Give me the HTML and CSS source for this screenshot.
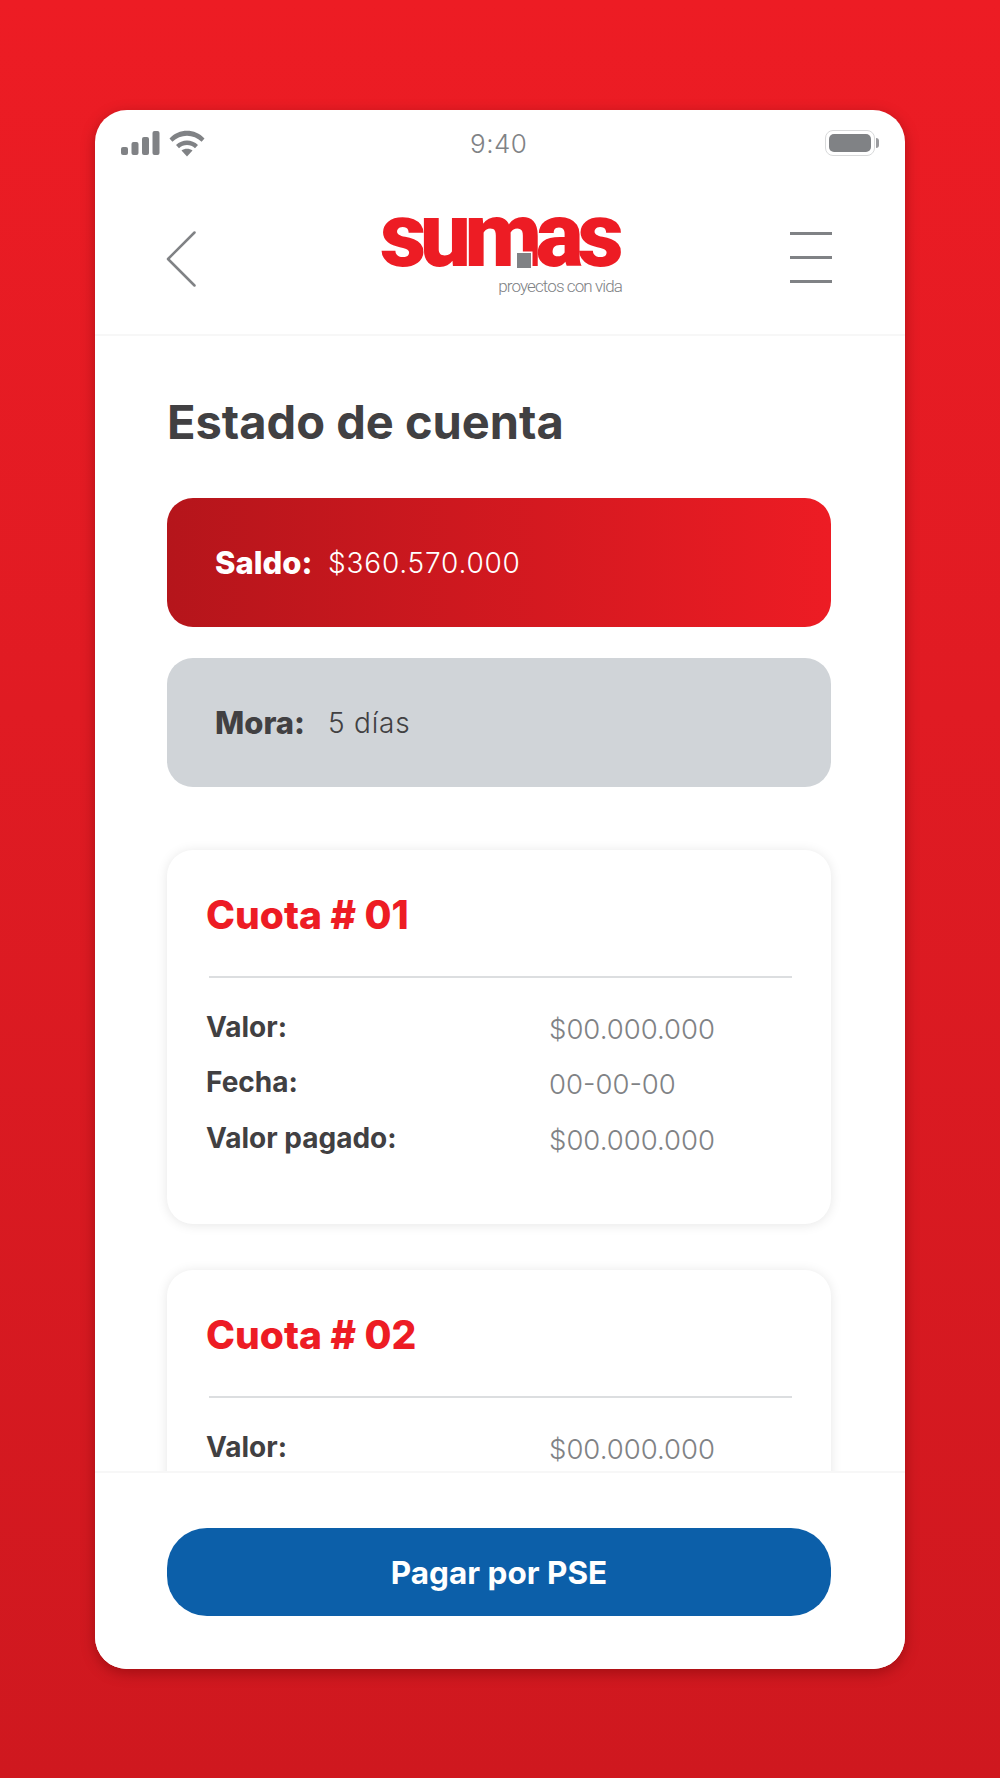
FILE: index.html
```html
<!DOCTYPE html>
<html lang="es">

<head>
    <meta charset="UTF-8">
    <meta name="viewport" content="width=device-width, initial-scale=1.0">
    <title>Estado de cuenta</title>
    <link rel="stylesheet" href="styles.css">
</head>

<body>

    <div class="phone">
        <div class="status-bar">
            <div class="status-icons">
                <svg width="39" height="26" viewBox="0 0 39 26" class="signal">
                    <rect x="0" y="17" width="7" height="8" rx="2"></rect>
                    <rect x="10.500" y="12" width="7" height="13" rx="2"></rect>
                    <rect x="21" y="7" width="7" height="18" rx="2"></rect>
                    <rect x="31.500" y="1" width="7" height="24" rx="2"></rect>
                </svg>
                <svg width="36" height="27" viewBox="0 0 36 27" class="wifi">
                    <path d="M0.500 8.500C10 -1.800 26 -1.800 35.500 8.500L32.600 11.800C24.500 3.600 11.500 3.600 3.400 11.800Z"></path>
                    <path d="M7 15C13 9 23 9 29 15L26 18.300C21.500 14 14.500 14 10 18.300Z"></path>
                    <path d="M12.500 20.500C15.500 18 20.500 18 23.500 20.500L18 26.500Z"></path>
                </svg>
            </div>
            <span class="clock">9:40</span>
            <div class="battery">
                <div class="battery-fill"></div>
            </div>
        </div>

        <header class="top-nav">
            <svg width="30" height="56" viewBox="0 0 30 56" class="back">
                <path d="M28.500 1.500L2 28L28.500 54.500"></path>
            </svg>
            <div class="logo">
                <div class="logo-word">sumas<span class="logo-dot"></span></div>
                <div class="logo-tag">proyectos con vida</div>
            </div>
            <div class="menu">
                <span></span>
                <span></span>
                <span></span>
            </div>
        </header>

        <main class="content">
            <h1>Estado de cuenta</h1>

            <div class="summary summary-red">
                <b>Saldo:</b>
                <span>$360.570.000</span>
            </div>
            <div class="summary summary-grey">
                <b>Mora:</b>
                <span>5 días</span>
            </div>

            <section class="cuota">
                <h2>Cuota # 01</h2>
                <hr>
                <div class="row"><b>Valor:</b><span>$00.000.000</span></div>
                <div class="row"><b>Fecha:</b><span>00-00-00</span></div>
                <div class="row"><b>Valor pagado:</b><span>$00.000.000</span></div>
            </section>

            <section class="cuota">
                <h2>Cuota # 02</h2>
                <hr>
                <div class="row"><b>Valor:</b><span>$00.000.000</span></div>
            </section>
        </main>

        <footer class="pay-bar">
            <button class="pay">Pagar por PSE</button>
        </footer>
    </div>

</body>

</html>
```

FILE: styles.css
```css
* {
    box-sizing: border-box;
}

body {
    margin: 0;
    height: 1778px;
    padding-top: 110px;
    font-family: Inter, "Open Sans", sans-serif;
    color: #414042;
    background: linear-gradient(180deg, #ed1c24 0%, #e01b23 40%, #cf181f 100%);
    overflow: hidden;
}

.phone {
    display: flex;
    flex-direction: column;
    width: 810px;
    height: 1559px;
    margin: 0 auto;
    border-radius: 32px;
    background: #fff;
    box-shadow: 0 4px 14px rgba(90, 0, 0, 0.4);
    overflow: hidden;
}

.status-bar {
    display: flex;
    align-items: center;
    justify-content: space-between;
    height: 66px;
    padding: 0 30px 0 26px;
    position: relative;
}

.status-icons {
    display: flex;
    align-items: center;
    gap: 9px;
}

.signal rect,
.wifi path {
    fill: #808285;
}

.clock {
    position: absolute;
    left: 375px;
    font-size: 26px;
    font-weight: 300;
    letter-spacing: 0.5px;
    color: #808285;
}

.battery {
    width: 50px;
    height: 26px;
    padding: 3px;
    border: 1px solid #d8d9da;
    border-radius: 8px;
    position: relative;
}

.battery::after {
    content: "";
    position: absolute;
    right: -5px;
    top: 7px;
    width: 3px;
    height: 10px;
    border-radius: 0 3px 3px 0;
    background: #9a9b9e;
}

.battery-fill {
    height: 100%;
    border-radius: 5px;
    background: #808285;
}

.top-nav {
    display: flex;
    align-items: flex-start;
    justify-content: space-between;
    height: 160px;
    padding: 55px 73px 0 71px;
    border-bottom: 2px solid #f7f7f7;
    position: relative;
}

.back path {
    fill: none;
    stroke: #808285;
    stroke-width: 2.500;
    stroke-linecap: round;
    stroke-linejoin: round;
}

.logo {
    position: absolute;
    left: 285px;
    top: 29px;
    width: 242px;
}

.logo-word {
    position: relative;
    height: 62px;
    font-family: Roboto, sans-serif;
    font-size: 90px;
    line-height: 62px;
    font-weight: 900;
    letter-spacing: -6.200px;
    color: #ed1c24;
}

.logo-dot {
    position: absolute;
    left: 137px;
    top: 48px;
    width: 14px;
    height: 15px;
    background: #808285;
    box-shadow: 0 0 0 1.500px #fff;
}

.logo-tag {
    margin-top: 9px;
    text-align: right;
    font-family: Roboto, sans-serif;
    font-size: 17px;
    line-height: 20px;
    font-weight: 300;
    letter-spacing: -0.900px;
    color: #808285;
}

.menu {
    display: flex;
    flex-direction: column;
    gap: 21px;
    width: 42px;
    margin-top: 1px;
}

.menu span {
    display: block;
    height: 3px;
    background: #808285;
}

.content {
    flex: 1;
    min-height: 0;
    padding: 56px 74px 0 72px;
    overflow: hidden;
}

h1 {
    margin: 0 0 46px;
    font-size: 47px;
    line-height: 60px;
    font-weight: 700;
}

.summary {
    display: flex;
    align-items: center;
    gap: 15px;
    height: 129px;
    margin-bottom: 31px;
    padding-left: 48px;
    border-radius: 26px;
    font-size: 28px;
    font-weight: 300;
    letter-spacing: 0.800px;
}

.summary b {
    font-size: 31px;
    font-weight: 800;
    letter-spacing: 0;
    min-width: 98px;
}

.summary-red {
    color: #fff;
    background: linear-gradient(90deg, #b5151b 0%, #ed1c24 100%);
}

.summary-grey {
    background: #d0d4d8;
}

.cuota {
    height: 374px;
    margin-top: 63px;
    padding: 40px 39px 0;
    border-radius: 26px;
    background: #fff;
    box-shadow: 0 1px 12px rgba(0, 0, 0, 0.1);
}

.cuota + .cuota {
    margin-top: 46px;
}

h2 {
    margin: 0;
    font-size: 39px;
    line-height: 50px;
    font-weight: 800;
    color: #ed1c24;
}

hr {
    height: 2px;
    margin: 36px 0 23px 3px;
    border: 0;
    background: #dcdee0;
}

.row {
    display: grid;
    grid-template-columns: 343px 1fr;
    align-items: center;
    height: 55.500px;
    font-size: 27.500px;
}

.row b {
    font-size: 28px;
    font-weight: 700;
    padding-bottom: 4px;
}

.row span {
    font-weight: 300;
    color: #808285;
}

.pay-bar {
    height: 198px;
    padding: 55px 74px 0 72px;
    border-top: 2px solid #f7f7f7;
    background: #fff;
}

.pay {
    display: block;
    width: 100%;
    height: 88px;
    border: 0;
    border-radius: 40px;
    font-family: inherit;
    font-size: 31.500px;
    font-weight: 700;
    color: #fff;
    background: #0c5fa9;
}
```
